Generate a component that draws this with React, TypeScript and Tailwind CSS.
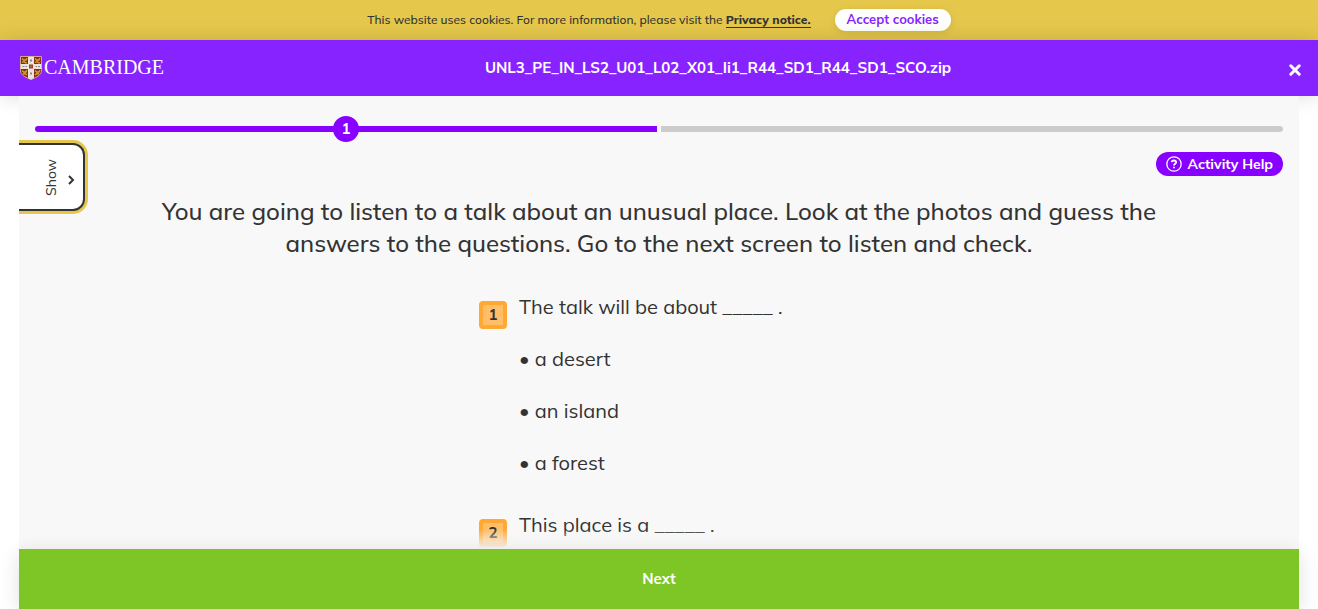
import React from "react";

const questions = [
  { id: 1, prompt: "The talk will be about _____ .", options: ["a desert", "an island", "a forest"] },
  { id: 2, prompt: "This place is a _____ .", options: [] as string[] },
];

function Shield() {
  return (
    <svg viewBox="0 0 22 24" className="h-6 w-[22px]" aria-hidden="true">
      <defs>
        <clipPath id="shield">
          <path d="M.5 .5H21.500V14.500C21.500 19 17 21 11 23.700C5 21 .5 19 .5 14.500Z" />
        </clipPath>
      </defs>
      <g clipPath="url(#shield)">
        <rect width="22" height="24" fill="#8a2a1a" />
        <rect x="8" width="6" height="24" fill="#e9e4e0" />
        <rect y="8" width="22" height="5" fill="#e9e4e0" />
        <g fill="none" stroke="#d3a52c" strokeWidth="1.300">
          <path d="M2 2.500L3.500 4H6L7 2M2 6.500L4 5.500L5.500 6.800H7M15 2.500L16.500 4H19L20 2M15 6.500L17 5.500L18.500 6.800H20" />
          <path d="M2 14.500L3.500 16H6L7 14M3 18L5 17.500L7 19M15 14.500L16.500 16H19L20 14M15 19L17 17.500L19 18" />
        </g>
        <rect x="9" y="8.500" width="4" height="4" fill="#b8351f" />
        <path d="M10 10.500h2M11 9.500v2" stroke="#8f7a45" />
        <path d="M10 4.500h2M11 3v3M2.500 10.500h2M5.500 10.500h1.500M15.500 10.500h1.500M18 10.500h2M11 16v3M10 17.500h2" stroke="#8d8782" />
      </g>
      <path d="M.5 .5H21.500V14.500C21.500 19 17 21 11 23.500C5 21 .5 19 .5 14.500Z" fill="none" stroke="#e3c49a" strokeWidth=".8" />
    </svg>
  );
}

function Badge({ n }: { n: number }) {
  return (
    <span className="mt-[10px] flex size-7 shrink-0 items-center justify-center rounded border-4 border-[#ffa834] bg-[#ffbe67] text-[15px] font-bold">
      {n}
    </span>
  );
}

export default function App() {
  return (
    <div className="flex h-screen flex-col overflow-hidden bg-white font-['Mulish','Muli','Noto_Sans',sans-serif] text-[#333]">
      <div className="flex h-10 shrink-0 items-center justify-center gap-6 bg-[#e5c84b] text-xs font-medium">
        <p>
          This website uses cookies. For more information, please visit the{" "}
          <a href="#privacy" className="border-b border-[#333] font-extrabold">Privacy notice.</a>
        </p>
        <button type="button" className="h-[22px] rounded-full bg-white px-3 pb-0.5 text-[13px] font-bold leading-none text-[#8723ff] shadow-[0_2px_8px_rgba(0,0,0,0.100)]">
          Accept cookies
        </button>
      </div>

      <header className="flex h-14 shrink-0 items-center bg-[#8723ff] px-5 text-white shadow-[0_0_20px_rgba(0,0,0,0.150)]">
        <a href="#home" className="flex items-start gap-0.5" aria-label="Cambridge">
          <Shield />
          <span className="font-['Liberation_Serif',serif] text-xl leading-[22px]">CAMBRIDGE</span>
        </a>
        <h1 className="flex-1 pr-4 text-center text-[15px] font-bold">UNL3_PE_IN_LS2_U01_L02_X01_Ii1_R44_SD1_R44_SD1_SCO.zip</h1>
        <button type="button" aria-label="Close" className="-mr-1 mt-1 p-px">
          <svg viewBox="0 0 12 12" className="size-3" fill="none" stroke="currentColor" strokeWidth="3" strokeLinecap="round">
            <path d="M1.800 1.800L10.200 10.200M10.200 1.800L1.800 10.200" />
          </svg>
        </button>
      </header>

      <main className="relative z-10 mx-[19px] min-h-0 flex-1 overflow-hidden bg-[#f8f8f8] px-4">
        <div className="mt-5 flex h-[26px] items-center gap-1">
          <div className="flex h-1.5 flex-1 items-center justify-center rounded-l-full bg-[#80f]">
            <span className="flex size-[26px] items-center justify-center rounded-full bg-[#80f] text-[15px] font-bold text-white">1</span>
          </div>
          <div className="h-1.5 flex-1 rounded-r-full bg-[#ccc]" />
        </div>

        <button
          type="button"
          className="absolute left-0 top-[47px] flex h-[68px] w-[66px] items-center justify-end gap-1.5 rounded-r-xl border-y-2 border-r-2 border-[#333] bg-white pr-2 shadow-[0_0_0_3px_#e5c84b]"
        >
          <span className="rotate-180 text-sm leading-5 [writing-mode:vertical-rl]">Show</span>
          <svg viewBox="0 0 8 10" className="mt-1.5 h-2.5 w-2" fill="none" stroke="currentColor" strokeWidth="2">
            <path d="M2 1L6 5L2 9" />
          </svg>
        </button>

        <div className="mt-2.5 flex justify-end">
          <button type="button" className="flex h-6 items-center gap-1.5 rounded-full bg-[#80f] px-2.5 text-sm font-bold text-white">
            <svg viewBox="0 0 16 16" className="size-4" fill="none" stroke="currentColor" strokeWidth="1.300">
              <circle cx="8" cy="8" r="7.200" />
              <path d="M5.700 6.200C5.900 3.800 10.300 3.900 10.200 6.300C10.100 7.800 8 7.800 8 9.500M8 10.800V12.300" strokeWidth="1.900" />
            </svg>
            Activity Help
          </button>
        </div>

        <h2 className="mx-auto mt-[19px] max-w-[1024px] text-center text-2xl font-medium leading-8">
          You are going to listen to a talk about an unusual place. Look at the photos and guess the answers to the questions. Go to the next screen to listen and check.
        </h2>

        <ol className="mx-auto mt-8 flex w-[360px] flex-col gap-[30px]">
          {questions.map((q) => (
            <li key={q.id} className="flex items-start gap-3">
              <Badge n={q.id} />
              <div className="text-xl leading-8">
                <p>{q.prompt}</p>
                {q.options.map((o) => (
                  <p key={o} className="mt-5">• {o}</p>
                ))}
              </div>
            </li>
          ))}
        </ol>
        <div className="pointer-events-none absolute inset-x-0 bottom-0 h-5 bg-gradient-to-t from-[#f8f8f8] to-transparent" />
      </main>

      <footer className="z-20 mx-[19px] shrink-0 shadow-[0_4px_20px_rgba(0,0,0,0.120)]">
        <button type="button" className="h-[60px] w-full bg-[#7ec526] text-[15px] font-bold text-white">Next</button>
      </footer>
    </div>
  );
}
